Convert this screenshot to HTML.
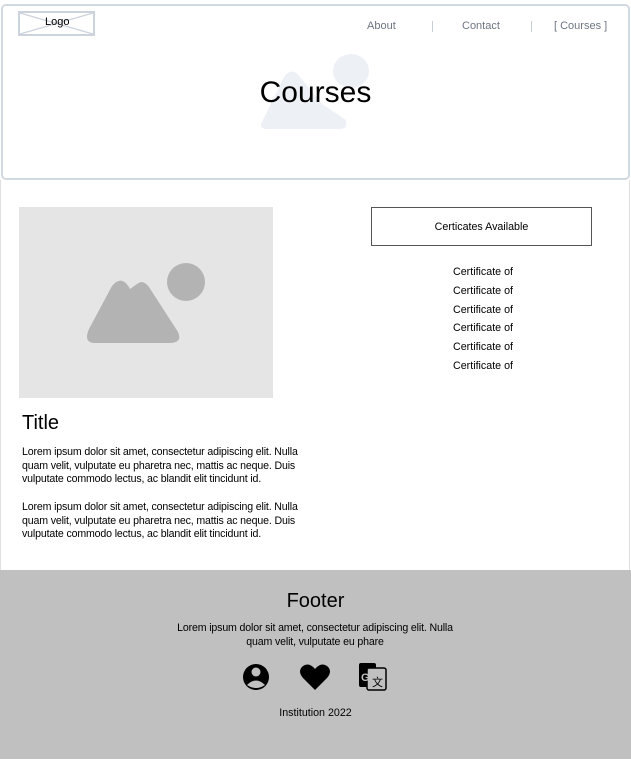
<!DOCTYPE html>
<html><head><meta charset="utf-8"><style>
*{margin:0;padding:0;box-sizing:border-box}
body{width:631px;height:763px;background:#fff;font-family:"Liberation Sans",Arial,sans-serif;position:relative;overflow:hidden;color:#000}
.abs{position:absolute}
.sideL{left:0;top:180px;width:1px;height:390px;background:#e0e0e0}
.sideR{left:629px;top:180px;width:1px;height:390px;background:#e0e0e0}
.hdr{left:1px;top:4px;width:629px;height:176px;border:2px solid #d3d9e1;border-radius:5px}
.logo{left:18px;top:11px;width:77px;height:25px;border:2px solid #ccd3dc}
.nav{top:20px;font-size:11px;color:#6e7582;font-family:"Liberation Sans",sans-serif}
.sep{top:21px;width:1px;height:11px;background:#c8ced6}
.p{font-size:10.6px;line-height:13.5px;letter-spacing:-0.15px}
.cert{font-size:10.7px;left:371px;width:224px;text-align:center}
</style></head><body>
<div class="abs sideL"></div><div class="abs sideR"></div>
<div class="abs hdr"></div>
<svg class="abs" style="left:0;top:0" width="631" height="180">
<line x1="20" y1="13" x2="93" y2="34" stroke="#ccd3dc" stroke-width="1.2"/>
<line x1="93" y1="13" x2="20" y2="34" stroke="#ccd3dc" stroke-width="1.2"/>
<path d="M262 122 L284 77 Q292 66 300 77 L322 104 L346 120 Q348 129 340 129 L268 129 Q258 129 262 122Z" fill="#edf0f5"/>
<ellipse cx="351" cy="71" rx="18" ry="17" fill="#edf0f5"/>
</svg>
<div class="abs logo"></div>
<div class="abs" style="left:45px;top:16px;font-size:11px">Logo</div>
<div class="abs nav" style="left:367px">About</div>
<div class="abs sep" style="left:432px"></div>
<div class="abs nav" style="left:462px">Contact</div>
<div class="abs sep" style="left:531px"></div>
<div class="abs nav" style="left:554px">[ Courses ]</div>
<div class="abs" style="left:0;width:631px;top:76px;text-align:center;font-size:30px">Courses</div>

<div class="abs" style="left:19px;top:207px;width:254px;height:191px;background:#e5e5e5"></div>
<svg class="abs" style="left:19px;top:207px" width="254" height="191">
<path d="M70 122 L93 79 Q103 67 111 82 L118 77 Q124 72 130 80 L159 125 Q164 136 150 136 L76 136 Q64 136 70 122Z" fill="#b3b3b3"/>
<ellipse cx="167" cy="75" rx="19" ry="19" fill="#b3b3b3"/>
</svg>
<div class="abs" style="left:22px;top:412px;font-size:20px">Title</div>
<div class="abs p" style="left:22px;top:446px;width:290px">Lorem ipsum dolor sit amet, consectetur adipiscing elit. Nulla quam velit, vulputate eu pharetra nec, mattis ac neque. Duis vulputate commodo lectus, ac blandit elit tincidunt id.</div>
<div class="abs p" style="left:22px;top:501px;width:290px">Lorem ipsum dolor sit amet, consectetur adipiscing elit. Nulla quam velit, vulputate eu pharetra nec, mattis ac neque. Duis vulputate commodo lectus, ac blandit elit tincidunt id.</div>

<div class="abs" style="left:371px;top:207px;width:221px;height:39px;border:1px solid #555;font-size:10.7px;text-align:center;line-height:38px">Certicates Available</div>
<div class="abs cert" style="top:266px">Certificate of</div>
<div class="abs cert" style="top:285px">Certificate of</div>
<div class="abs cert" style="top:304px">Certificate of</div>
<div class="abs cert" style="top:322px">Certificate of</div>
<div class="abs cert" style="top:341px">Certificate of</div>
<div class="abs cert" style="top:360px">Certificate of</div>

<div class="abs" style="left:0;top:570px;width:631px;height:189px;background:#c0c0c0"></div>
<div class="abs" style="left:0;top:590px;width:631px;text-align:center;font-size:20px">Footer</div>
<div class="abs p" style="left:165px;top:622px;width:300px;text-align:center">Lorem ipsum dolor sit amet, consectetur adipiscing elit. Nulla quam velit, vulputate eu phare</div>
<svg class="abs" style="left:0;top:660px" width="631" height="36">
<circle cx="256" cy="17" r="13" fill="#000"/>
<circle cx="256" cy="12" r="4.5" fill="#c0c0c0"/>
<path d="M247 25 Q256 16 265 25 Q256 31 247 25Z" fill="#c0c0c0"/>
<path d="M315 30 L303 18 Q297 11 303 6 Q309 2 315 9 Q321 2 327 6 Q333 11 327 18Z" fill="#000"/>
<rect x="359" y="3" width="17" height="24" rx="2" fill="#000"/>
<rect x="367" y="8" width="19" height="22" rx="2" fill="#c0c0c0" stroke="#000" stroke-width="1.5"/>
<text x="361" y="21" font-size="11" font-weight="bold" fill="#c0c0c0" font-family="Liberation Sans">G</text>
<text x="372" y="26" font-size="11" fill="#000" font-family="Liberation Sans, Noto Sans CJK SC, sans-serif">文</text>
</svg>
<div class="abs" style="left:0;top:707px;width:631px;text-align:center;font-size:10.7px">Institution 2022</div>
</body></html>
